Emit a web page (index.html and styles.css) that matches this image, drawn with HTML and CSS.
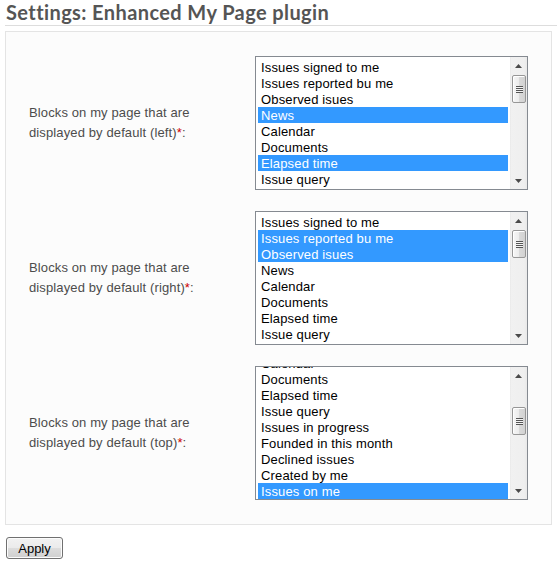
FILE: index.html
```html
<!DOCTYPE html>
<html lang="en">
<head>
<meta charset="utf-8">
<title>Settings: Enhanced My Page plugin</title>
<link rel="stylesheet" href="styles.css">
</head>
<body>
<div class="content">
  <h2 class="title">Settings: Enhanced My Page plugin</h2>
  <form class="settings">
    <div class="box">
      <div class="field">
        <label class="label">Blocks on my page that are displayed by default (left)<span class="req">*</span>:</label>
        <div class="listbox" role="listbox" aria-multiselectable="true">
          <div class="viewport">
            <ul class="options">
              <li class="opt">Issues signed to me</li>
              <li class="opt">Issues reported bu me</li>
              <li class="opt">Observed isues</li>
              <li class="opt sel">News</li>
              <li class="opt">Calendar</li>
              <li class="opt">Documents</li>
              <li class="opt sel">Elapsed time</li>
              <li class="opt">Issue query</li>
            </ul>
          </div>
          <div class="scrollbar">
            <div class="sb-btn"><svg class="arrow" width="7" height="4" viewBox="0 0 7 4"><polygon points="0,4 3.5,0 7,4"/></svg></div>
            <div class="sb-track"><div class="thumb" style="margin-top:1px"><span class="grip"></span></div></div>
            <div class="sb-btn"><svg class="arrow" width="7" height="4" viewBox="0 0 7 4"><polygon points="0,0 7,0 3.5,4"/></svg></div>
          </div>
        </div>
      </div>

      <div class="field">
        <label class="label">Blocks on my page that are displayed by default (right)<span class="req">*</span>:</label>
        <div class="listbox" role="listbox" aria-multiselectable="true">
          <div class="viewport">
            <ul class="options">
              <li class="opt">Issues signed to me</li>
              <li class="opt sel">Issues reported bu me</li>
              <li class="opt sel">Observed isues</li>
              <li class="opt">News</li>
              <li class="opt">Calendar</li>
              <li class="opt">Documents</li>
              <li class="opt">Elapsed time</li>
              <li class="opt">Issue query</li>
            </ul>
          </div>
          <div class="scrollbar">
            <div class="sb-btn"><svg class="arrow" width="7" height="4" viewBox="0 0 7 4"><polygon points="0,4 3.5,0 7,4"/></svg></div>
            <div class="sb-track"><div class="thumb" style="margin-top:1px"><span class="grip"></span></div></div>
            <div class="sb-btn"><svg class="arrow" width="7" height="4" viewBox="0 0 7 4"><polygon points="0,0 7,0 3.5,4"/></svg></div>
          </div>
        </div>
      </div>

      <div class="field">
        <label class="label">Blocks on my page that are displayed by default (top)<span class="req">*</span>:</label>
        <div class="listbox" role="listbox" aria-multiselectable="true">
          <div class="viewport">
            <ul class="options" style="margin-top:-14px">
              <li class="opt">Calendar</li>
              <li class="opt">Documents</li>
              <li class="opt">Elapsed time</li>
              <li class="opt">Issue query</li>
              <li class="opt">Issues in progress</li>
              <li class="opt">Founded in this month</li>
              <li class="opt">Declined issues</li>
              <li class="opt">Created by me</li>
              <li class="opt sel">Issues on me</li>
            </ul>
          </div>
          <div class="scrollbar">
            <div class="sb-btn"><svg class="arrow" width="7" height="4" viewBox="0 0 7 4"><polygon points="0,4 3.5,0 7,4"/></svg></div>
            <div class="sb-track"><div class="thumb" style="margin-top:23px"><span class="grip"></span></div></div>
            <div class="sb-btn"><svg class="arrow" width="7" height="4" viewBox="0 0 7 4"><polygon points="0,0 7,0 3.5,4"/></svg></div>
          </div>
        </div>
      </div>
    </div>
    <button type="submit" class="btn">Apply</button>
  </form>
</div>
</body>
</html>
```

FILE: styles.css
```css
html, body {
  margin: 0;
  padding: 0;
  background: #ffffff;
}

body {
  font-family: "Liberation Sans", Arial, sans-serif;
  font-size: 13px;
  color: #4c4c4c;
}

.content {
  padding-left: 5px;
}

.title {
  margin: 0 0 5px 0;
  padding: 0 0 0 1px;
  height: 25px;
  line-height: 25px;
  font-family: Lato, "DejaVu Sans", sans-serif;
  font-weight: bold;
  font-size: 20px;
  letter-spacing: 0.4px;
  color: #555555;
  border-bottom: 1px solid #dddddd;
  white-space: nowrap;
}

.settings {
  margin: 0;
}

.box {
  width: 547px;
  box-sizing: border-box;
  background: #fcfcfc;
  border: 1px solid #e4e4e4;
  padding: 24px 23px;
  display: flex;
  flex-direction: column;
  gap: 21px;
}

.field {
  display: grid;
  grid-template-columns: 226px 273px;
  align-items: center;
}

.label {
  width: 205px;
  line-height: 20px;
  letter-spacing: 0.12px;
  color: #4c4c4c;
}

.req {
  color: #cc0000;
}

.listbox {
  width: 273px;
  height: 134px;
  box-sizing: border-box;
  border: 1px solid #858a91;
  background: #ffffff;
  display: flex;
}

.viewport {
  flex: 1;
  overflow: hidden;
  padding: 2px 2px 0 2px;
}

.options {
  list-style: none;
  margin: 0;
  padding: 0;
}

.opt {
  height: 16px;
  box-sizing: border-box;
  padding: 1px 0 0 3px;
  line-height: 15px;
  font-size: 13px;
  letter-spacing: 0.15px;
  color: #000000;
  white-space: nowrap;
}

.opt.sel {
  background: #3399ff;
  color: #ffffff;
}

.scrollbar {
  width: 17px;
  display: flex;
  flex-direction: column;
  background: linear-gradient(to right, #e6e6e6 0, #f1f1f1 1px, #efefef 14px, #e9e9e9 17px);
}

.sb-btn {
  height: 17px;
  display: flex;
  align-items: center;
  justify-content: center;
}

.arrow {
  display: block;
  fill: #4a4a4a;
}

.sb-track {
  flex: 1;
}

.thumb {
  width: 14px;
  height: 28px;
  margin-left: 2px;
  box-sizing: border-box;
  border: 1px solid #979797;
  border-radius: 2px;
  background: linear-gradient(to right, #f6f6f6 0, #ececec 50%, #dadada 51%, #d2d2d2 100%);
  box-shadow: inset 1px 1px 0 #ffffff;
  display: flex;
  align-items: center;
  justify-content: center;
}

.grip {
  display: block;
  width: 7px;
  height: 7px;
  background: repeating-linear-gradient(to bottom, #555555 0, #555555 1px, #f4f4f4 1px, #f4f4f4 2px);
}

.btn {
  display: block;
  margin: 12px 0 0 1px;
  width: 57px;
  height: 22px;
  padding: 0;
  font-family: "Liberation Sans", Arial, sans-serif;
  font-size: 13px;
  color: #000000;
  border: 1px solid #707070;
  border-radius: 3px;
  background: linear-gradient(to bottom, #f2f2f2 0, #ebebeb 50%, #dddddd 51%, #cfcfcf 100%);
  box-shadow: inset 0 0 0 1px #fcfcfc;
}
```
